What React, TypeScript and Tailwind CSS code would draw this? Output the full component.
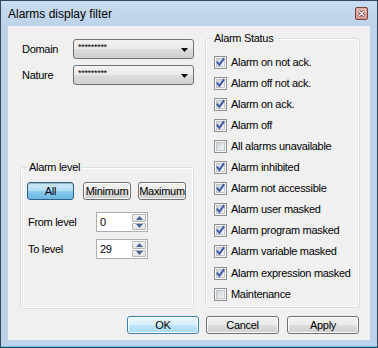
import React from "react";

const font = { fontFamily: '"Liberation Sans", Arial, sans-serif' };

const btnBase =
  "flex h-[18px] items-center justify-center rounded-[3px] border text-[11px] leading-none tracking-[-0.3px] text-black shadow-[inset_0_0_0_1px_#fcfcfc]";
const btnNormal =
  "border-[#707070] bg-[linear-gradient(180deg,#f2f2f2_0%,#ebebeb_50%,#dddddd_50%,#cfcfcf_100%)]";
const btnDefault =
  "border-[#3c7fb1] bg-[linear-gradient(180deg,#eaf6fd_0%,#d9f0fc_50%,#bee6fd_50%,#a7d9f5_100%)] shadow-[inset_0_0_0_1px_#dff3fe]";
const btnPressed =
  "border-[#2c628b] bg-[linear-gradient(180deg,#cfeafa_0%,#b3dcf3_50%,#8ccbee_50%,#6bb6e0_100%)] shadow-[inset_0_1px_1px_rgba(0,0,0,0.25)]";

const statuses: [string, boolean][] = [
  ["Alarm on not ack.", true],
  ["Alarm off not ack.", true],
  ["Alarm on ack.", true],
  ["Alarm off", true],
  ["All alarms unavailable", false],
  ["Alarm inhibited", true],
  ["Alarm not accessible", true],
  ["Alarm user masked", true],
  ["Alarm program masked", true],
  ["Alarm variable masked", true],
  ["Alarm expression masked", true],
  ["Maintenance", false],
];

function Checkbox({ checked }: { checked: boolean }) {
  return (
    <svg width="13" height="13" viewBox="0 0 13 13" className="shrink-0">
      <defs>
        <linearGradient id="cbIn" x1="0" y1="0" x2="1" y2="1">
          <stop offset="0" stopColor="#cbcfd5" />
          <stop offset="1" stopColor="#f7f7f7" />
        </linearGradient>
      </defs>
      <rect x="0.5" y="0.5" width="12" height="12" fill="#f4f4f4" stroke="#8e8f8f" />
      <rect x="2.5" y="2.5" width="8" height="8" fill="url(#cbIn)" stroke="#c3c6cb" />
      {checked && (
        <path
          d="M3.4 6.4 L5.4 8.9 L9.6 2.9"
          fill="none"
          stroke="#3b59a8"
          strokeWidth="1.9"
          strokeLinecap="square"
        />
      )}
    </svg>
  );
}

function Select() {
  return (
    <div
      className={`flex h-[20px] w-[121px] items-start rounded-[3px] border pl-[4px] ${btnNormal}`}
    >
      <span className="pt-[3px] text-[9px] leading-none text-black">*********</span>
      <svg width="7" height="4" viewBox="0 0 7 4" className="ml-auto mr-[5px] mt-[8px]">
        <path d="M0 0 H7 L3.5 4 Z" fill="#000" />
      </svg>
    </div>
  );
}

function Spin({ value }: { value: string }) {
  return (
    <div className="flex h-[20px] w-[52px] border border-[#abadb3] bg-white">
      <span className="flex-1 pl-[3px] pt-[3px] text-[11px] leading-[13px] text-black">{value}</span>
      <div className="flex w-[16px] flex-col gap-[1px] p-[1px]">
        {[0, 1].map((i) => (
          <div
            key={i}
            className="flex flex-1 items-center justify-center rounded-[1px] border border-[#b5b5b5] bg-[linear-gradient(180deg,#f5f5f5,#e2e2e2)]"
          >
            <svg width="7" height="4" viewBox="0 0 7 4">
              <path d={i === 0 ? "M0 4 H7 L3.5 0 Z" : "M0 0 H7 L3.5 4 Z"} fill="#4a6398" />
            </svg>
          </div>
        ))}
      </div>
    </div>
  );
}

function GroupBox({
  title,
  className,
  children,
}: {
  title: string;
  className: string;
  children: React.ReactNode;
}) {
  return (
    <div
      className={`relative rounded-[3px] border border-[#d5dfe5] shadow-[inset_0_0_0_1px_#ffffff] ${className}`}
    >
      <span className="absolute -top-[7px] left-[6px] bg-[#f0f0f0] px-[2px] text-[11px] leading-[13px] tracking-[-0.3px] text-black">
        {title}
      </span>
      {children}
    </div>
  );
}

export default function App() {
  return (
    <div
      className="flex h-[348px] w-[378px] flex-col border border-[#34475c] bg-[#bcd3ea] shadow-[inset_0_-1px_0_#5ec6e6]"
      style={font}
    >
      {/* Title bar */}
      <div className="flex h-[25px] items-center bg-[linear-gradient(180deg,#c9dcf0,#bcd3ea)] pl-[7px] pr-[9px]">
        <span className="text-[12px] text-black">Alarms display filter</span>
        <svg width="13" height="13" viewBox="0 0 13 13" className="ml-auto">
          <rect x="0.5" y="0.5" width="12" height="12" rx="1.5" fill="#d69d97" stroke="#7b3f3b" />
          <rect x="1.5" y="1.5" width="10" height="5" fill="#e4b8b2" />
          <path d="M4 4 L9 9 M9 4 L4 9" stroke="#5c2a28" strokeWidth="2.6" />
          <path d="M4 4 L9 9 M9 4 L4 9" stroke="#ffffff" strokeWidth="1.4" />
        </svg>
      </div>

      {/* Client area */}
      <div className="mx-[7px] flex h-[314px] flex-col bg-[#f0f0f0] text-[11px] tracking-[-0.3px] text-black">
        <div className="flex pl-[12px] pt-[12px]">
          {/* Left column */}
          <div className="flex h-[271px] w-[174px] flex-col">
            <div className="mt-[1px] flex items-center">
              <span className="w-[53px] pl-[2px]">Domain</span>
              <Select />
            </div>
            <div className="mt-[6px] flex items-center">
              <span className="w-[53px] pl-[2px]">Nature</span>
              <Select />
            </div>

            <GroupBox title="Alarm level" className="mt-auto h-[142px] w-[174px]">
              <div className="flex pl-[6px] pt-[14px]">
                <div className={`${btnBase} ${btnPressed} w-[47px]`}>All</div>
                <div className={`${btnBase} ${btnNormal} ml-[9px] w-[48px]`}>Minimum</div>
                <div className={`${btnBase} ${btnNormal} ml-[7px] w-[48px]`}>Maximum</div>
              </div>
              <div className="mt-[12px] flex items-center">
                <span className="w-[75px] pl-[7px]">From level</span>
                <Spin value="0" />
              </div>
              <div className="mt-[7px] flex items-center">
                <span className="w-[75px] pl-[7px]">To level</span>
                <Spin value="29" />
              </div>
            </GroupBox>
          </div>

          {/* Alarm status */}
          <GroupBox title="Alarm Status" className="ml-[11px] h-[270px] w-[155px]">
            <div className="flex flex-col pl-[8px] pt-[13px]">
              {statuses.map(([label, checked]) => (
                <div
                  key={label}
                  className={`flex h-[21px] items-center gap-[4px] ${
                    label === "Alarm expression masked" ? "mt-[1px]" : ""
                  }`}
                >
                  <Checkbox checked={checked} />
                  <span className="whitespace-nowrap">{label}</span>
                </div>
              ))}
            </div>
          </GroupBox>
        </div>

        {/* Buttons */}
        <div className="mt-[7px] flex justify-end pr-[11px]">
          <div className={`${btnBase} ${btnDefault} w-[72px]`}>OK</div>
          <div className={`${btnBase} ${btnNormal} ml-[7px] w-[73px]`}>Cancel</div>
          <div className={`${btnBase} ${btnNormal} ml-[8px] w-[72px]`}>Apply</div>
        </div>
      </div>
    </div>
  );
}
